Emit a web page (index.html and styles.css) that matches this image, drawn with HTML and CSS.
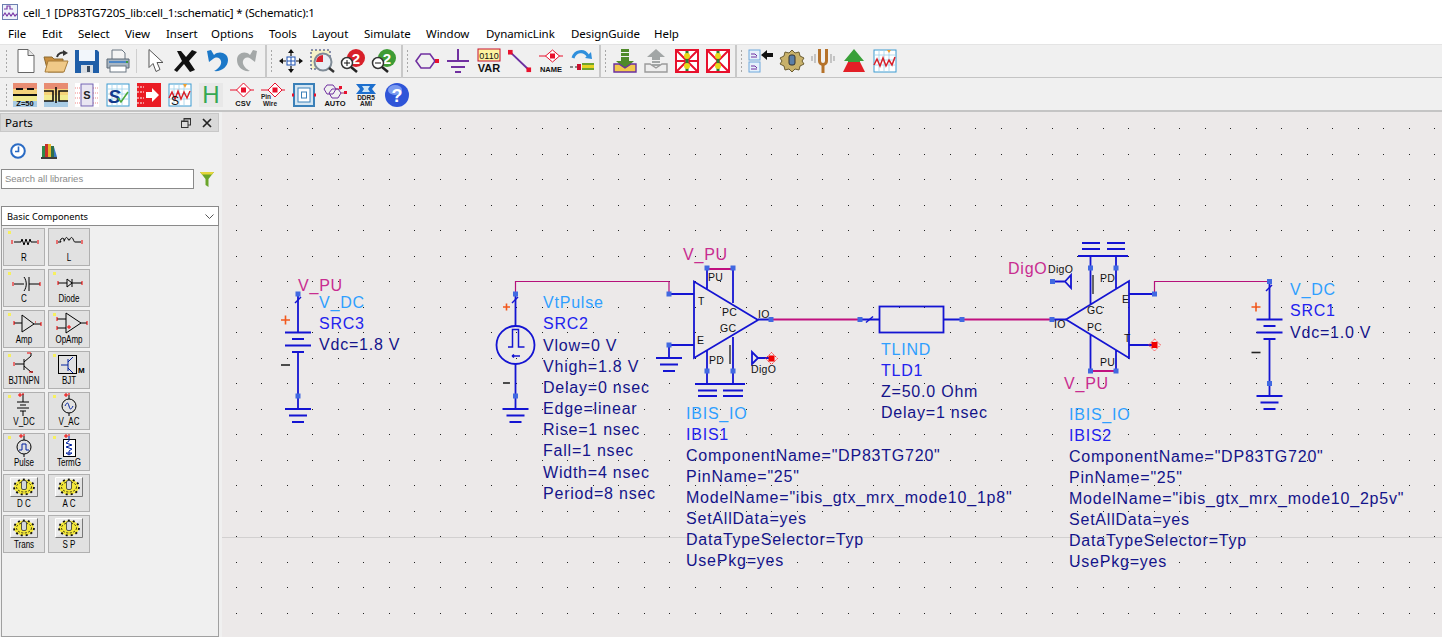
FILE: index.html
```html
<!DOCTYPE html>
<html lang="en">
<head>
<meta charset="utf-8">
<title>cell_1 schematic</title>
<link rel="stylesheet" href="styles.css">
</head>
<body>
<svg class="defs" width="0" height="0" aria-hidden="true">
  <defs>
    <g id="gear">
      <ellipse cx="20" cy="12" rx="10" ry="7.500" fill="#f4e83a" stroke="#111" stroke-width="1.800" stroke-dasharray="2 3"/>
      <ellipse cx="20" cy="12" rx="7.500" ry="5" fill="none" stroke="#111" stroke-width=".8" stroke-dasharray="2 1.500"/>
      <rect x="17.500" y="5.500" width="5" height="9" rx="1.500" fill="#d4d8dc" stroke="#333" stroke-width=".8"/>
    </g>
    <g id="ssch">
      <rect x="1" y="1" width="22" height="22" fill="#fff" stroke="#3d9bd1"/>
      <path d="M1 6h22M1 11h22M1 16h22M6 1v22M11 1v22M16 1v22" stroke="#9fd0ea" stroke-width=".8"/>
    </g>
    <g id="redhatch">
      <rect x="1" y="1" width="22" height="22" fill="#fff" stroke="#e8112d" stroke-width="2"/>
      <path d="M1 1l22 22M23 1L1 23" stroke="#e8112d" stroke-width="2"/>
      <rect x="10.500" y="2" width="3" height="20" fill="#2e7d32"/>
      <circle cx="12" cy="7" r="3" fill="#e8d81a"/><circle cx="12" cy="17" r="3" fill="#e8d81a"/>
    </g>
  </defs>
</svg>
<header class="title-bar">
  <svg class="app-icon" width="16" height="16" viewBox="0 0 16 16"><rect x=".5" y=".5" width="15" height="15" fill="#eef3fa" stroke="#6c7fb0"/><path d="M2 5h3V2h3v3h3M1 12l2-3 2 3 2-3 2 3 2-3 2 3 2-2" fill="none" stroke="#7a3aa8" stroke-width="1.2"/></svg>
  <span>cell_1 [DP83TG720S_lib:cell_1:schematic] * (Schematic):1</span>
</header>
<nav class="menu-bar">
  <span>File</span><span>Edit</span><span>Select</span><span>View</span><span>Insert</span><span>Options</span><span>Tools</span><span>Layout</span><span>Simulate</span><span>Window</span><span>DynamicLink</span><span>DesignGuide</span><span>Help</span>
</nav>
<div class="toolbar">
  <div class="group">
    <i class="grip grip-first"></i>
    <svg class="ic" viewBox="0 0 24 24"><path d="M5 .5h10l6 6v17H5z" fill="#fff" stroke="#666"/><path d="M15 .5v6h6" fill="#e6e6e6" stroke="#666"/></svg>
    <svg class="ic" viewBox="0 0 24 24"><path d="M0 8h8l2 2h9v13H4z" fill="#c98f3f" stroke="#8c6a30"/><path d="M4 12h20l-4 11H1z" fill="#f0c987" stroke="#a67c3a"/><path d="M13 8c1-4 5-5 8-4" fill="none" stroke="#333" stroke-width="2"/><path d="M19 1l5 3-5 3z" fill="#333"/></svg>
    <svg class="ic" viewBox="0 0 24 24"><path d="M0 1h22l2 2v21H0z" fill="#1f5ea8"/><rect x="4" y="1" width="16" height="11" fill="#f2f6fb"/><rect x="6" y="16" width="12" height="8" fill="#d8dde3"/><rect x="12" y="17" width="3" height="6" fill="#3a4a5e"/></svg>
    <svg class="ic" viewBox="0 0 24 24"><path d="M6 1h10l3 3v7H6z" fill="#f4f4f4" stroke="#6b7682"/><path d="M1 10h22v9H1z" fill="#a9b6c2" stroke="#5c6874"/><rect x="4" y="17" width="16" height="6" fill="#fff" stroke="#6b7682"/><rect x="3" y="12" width="18" height="2" fill="#4e87c6"/><rect x="20" y="12" width="2" height="2" fill="#3c9c3c"/></svg>
    <i class="sep"></i>
    <svg class="ic" viewBox="0 0 24 24"><path d="M6 .5v18l4-4 3 8 4-2-3-7h6z" fill="#fff" stroke="#555"/></svg>
    <svg class="ic" viewBox="0 0 24 24"><path d="M3 2l4 0 5 6 6-7 5 2-8 9 6 9-5 2-6-8-7 8-3-2 8-9z" fill="#111"/></svg>
    <svg class="ic" viewBox="0 0 24 24"><path d="M2 2l2 11 4-3c4-3 7-1 8 2 1 4-3 8-7 10 7 1 14-4 14-11 0-7-9-10-14-5L6 1z" fill="#1c78c8"/></svg>
    <svg class="ic" viewBox="0 0 24 24"><path d="M21 2l-2 11-4-3c-4-3-7-1-8 2-1 4 3 8 7 10-7 1-13-4-13-11 0-7 8-10 13-5l3-5z" fill="#a4a8a8"/></svg>
  </div>
  <div class="group">
    <i class="grip"></i>
    <svg class="ic" viewBox="0 0 24 24"><rect x="8" y="8" width="8" height="8" fill="#fff" stroke="#1c50b0"/><path d="M12 8v8M8 12h8" stroke="#1c50b0"/><path d="M12 1v6M12 17v6M1 12h6M17 12h6" stroke="#111" stroke-width="1.2"/><path d="M12 0l3 4H9zM12 24l3-4H9zM0 12l4-3v6zM24 12l-4-3v6z" fill="#111"/></svg>
    <svg class="ic" viewBox="0 0 24 24"><rect x="1" y="1" width="19" height="19" fill="#f5f2c8" stroke="#22306e" stroke-dasharray="2 2"/><circle cx="13" cy="13" r="8.500" fill="#e8eef4" stroke="#7f8b96" stroke-width="2"/><path d="M13 6v7H6a7 7 0 0 1 7-7z" fill="#d8202a"/><path d="M19 19l5 4" stroke="#333" stroke-width="2.500"/></svg>
    <svg class="ic" viewBox="0 0 24 24"><circle cx="15" cy="9" r="9" fill="#d8202a"/><text class="ball" x="15" y="14.500">2</text><circle cx="6" cy="14" r="5.500" fill="#fff" stroke="#333" stroke-width="1.500"/><path d="M3 14h6M6 11v6" stroke="#111"/><path d="M10 18l6 5" stroke="#222" stroke-width="2.500"/></svg>
    <svg class="ic" viewBox="0 0 24 24"><circle cx="15" cy="9" r="9" fill="#3e9c35"/><text class="ball" x="15" y="14.500">2</text><circle cx="6" cy="14" r="5.500" fill="#fff" stroke="#333" stroke-width="1.500"/><path d="M3 14h6" stroke="#111"/><path d="M10 18l6 5" stroke="#222" stroke-width="2.500"/></svg>
  </div>
  <div class="group">
    <i class="grip"></i>
    <svg class="ic" viewBox="0 0 24 24"><path d="M1 12l5-7h9l5 7-5 7H6z" fill="none" stroke="#7030a0" stroke-width="1.600"/><rect x="20" y="10" width="4" height="4" fill="#e8112d"/></svg>
    <svg class="ic" viewBox="0 0 24 24"><path d="M12 0v12M1 12h22M5 18h14M9 23h6" stroke="#7030a0" stroke-width="2"/></svg>
    <svg class="ic" viewBox="0 0 24 24"><rect x="1" y="0" width="22" height="12" fill="#fdf3a0" stroke="#c8102e"/><text class="var-a" x="12" y="9.500">0110</text><text class="var-b" x="12" y="23">VAR</text></svg>
    <svg class="ic" viewBox="0 0 26 24"><path d="M3 3l20 19" stroke="#6a2fa0" stroke-width="2"/><rect x="0" y="0" width="5" height="5" fill="#e8112d"/><rect x="20" y="19" width="5" height="5" fill="#e8112d"/></svg>
    <svg class="ic" viewBox="0 0 24 24"><path d="M0 7h7M20 7h4" stroke="#e8112d"/><path d="M13.500 1l7 6-7 6-7-6z" fill="#fff" stroke="#e8112d"/><rect x="11" y="4.500" width="5" height="5" fill="#e8112d"/><text class="icon-lbl" x="12" y="23">NAME</text></svg>
    <svg class="ic" viewBox="0 0 24 24"><path d="M3 9c2-7 11-9 15-2" fill="none" stroke="#2f8fdc" stroke-width="3"/><path d="M15 9l7 1-1-7z" fill="#2f8fdc"/><path d="M0 18h3M5 18h3M8 18h3" stroke="#222"/><rect x="7" y="15" width="4" height="6" fill="#c8102e"/><rect x="12" y="14" width="12" height="7" fill="#6ea32e"/><rect x="12" y="16" width="12" height="3" fill="#e6d320"/></svg>
  </div>
  <div class="group">
    <i class="grip"></i>
    <svg class="ic" viewBox="0 0 24 24"><path d="M8 0h8v3H8zM8 4h8v3H8zM8 8h8v4h5l-9 8-9-8h5z" fill="#4f8a2a"/><path d="M1 15v8h22v-8h-5l-6 4-6-4z" fill="#f2c94c" stroke="#6a2fa0" stroke-width="1.400"/></svg>
    <svg class="ic" viewBox="0 0 24 24"><path d="M12 0l9 8h-5v3H8V8H3zM8 12h8v2H8zM8 15h8v2H8z" fill="#a2a6a6"/><path d="M1 15v8h22v-8h-5l-6 4-6-4z" fill="#eee" stroke="#9a9a9a" stroke-width="1.400"/></svg>
    <svg class="ic" viewBox="0 0 24 24"><use href="#redhatch"/><path d="M1 12h9M14 12h9" stroke="#e8112d" stroke-width="2"/></svg>
    <svg class="ic" viewBox="0 0 24 24"><use href="#redhatch"/></svg>
  </div>
  <div class="group group-last">
    <i class="grip"></i>
    <svg class="ic" viewBox="0 0 24 24"><rect x="0" y="1" width="11" height="10" fill="#e5f1fb" stroke="#6fa8dc"/><rect x="0" y="13" width="11" height="10" fill="#e5f1fb" stroke="#6fa8dc"/><path d="M2 5h4l2 2M2 8h6M2 17h4l2 2M2 20h6" fill="none" stroke="#7030a0"/><path d="M12 6l6-5v3h6v4h-6v3z" fill="#111"/></svg>
    <svg class="ic" viewBox="0 0 24 24"><path d="M12 1l3 3 4-1 1 4 4 2-2 3 2 3-4 2-1 4-4-1-3 3-3-3-4 1-1-4-4-2 2-3-2-3 4-2 1-4 4 1z" fill="#c8b16a" stroke="#6b5d33"/><rect x="9" y="6" width="6" height="10" rx="2" fill="#5b7fa8" stroke="#333"/></svg>
    <svg class="ic" viewBox="0 0 24 24"><path d="M7 0v12a5 5 0 0 0 10 0V0h-3v12a2 2 0 0 1-4 0V0z" fill="#b5722a"/><rect x="10.500" y="16" width="3" height="8" fill="#b5722a"/><path d="M4 5v9M1 7v5M20 5v9M23 7v5" stroke="#999"/></svg>
    <svg class="ic" viewBox="0 0 24 24"><path d="M12 0l10 12h-4v2H6v-2H2z" fill="#3aa03a"/><path d="M6 13h12l5 10H1z" fill="#e21f26"/></svg>
    <svg class="ic" viewBox="0 0 24 24"><use href="#ssch"/><path d="M1 16l3-6 3 7 3-8 3 8 3-6 3 5 3-8" fill="none" stroke="#d8202a" stroke-width="1.500"/><path d="M14 1h4l-2 3z" fill="#f2a02e"/></svg>
  </div>
</div>
<div class="toolbar toolbar-second">
  <i class="grip grip-first"></i>
  <svg class="ic" viewBox="0 0 24 24"><rect width="24" height="6" fill="#e88c72"/><rect y="6" width="24" height="6" fill="#f5d37a"/><rect y="12" width="24" height="6" fill="#f2eb8f"/><rect y="18" width="24" height="6" fill="#a8cbe4"/><path d="M3 6h7M14 6h7M0 12h24" stroke="#111" stroke-width="2"/><text class="z50" x="12" y="22.500">Z=50</text></svg>
  <svg class="ic" viewBox="0 0 24 24"><rect width="24" height="6" fill="#e88c72"/><rect y="6" width="24" height="6" fill="#f5d37a"/><rect y="12" width="24" height="6" fill="#f2eb8f"/><rect y="18" width="24" height="6" fill="#a8cbe4"/><path d="M0 8h9v10H0M24 8h-9v10h9M12 4v16" fill="none" stroke="#111" stroke-width="1.600"/></svg>
  <svg class="ic" viewBox="0 0 24 24"><rect width="24" height="24" fill="#fff"/><path d="M0 5h6M0 10h6M0 15h6M0 20h6M18 5h6M18 10h6M18 15h6M18 20h6" stroke="#e88" stroke-dasharray="1 1"/><rect x="6" y="1" width="12" height="22" fill="#e9e6f2" stroke="#7060b0"/><text class="s-small" x="12" y="16">S</text></svg>
  <svg class="ic" viewBox="0 0 24 24"><use href="#ssch"/><text class="s-big" x="2" y="20">S</text><path d="M12 15l3 4 7-10" fill="none" stroke="#4aa83a" stroke-width="1.600"/></svg>
  <svg class="ic" viewBox="0 0 24 24"><rect width="24" height="24" fill="#ea1c24"/><path d="M0 4h7M0 9h7M0 15h7M0 20h7" stroke="#fff" stroke-dasharray="2 1"/><path d="M9 9h6V5l7 7-7 7v-4H9z" fill="#fff"/></svg>
  <svg class="ic" viewBox="0 0 24 24"><use href="#ssch"/><path d="M1 15l3-6 3 7 3-8 3 8 3-7 3 6 3-7" fill="none" stroke="#d8202a" stroke-width="1.400"/><path d="M15 1h4l-2 4z" fill="#f2a02e"/><text class="s-mid" x="3" y="21.500">S</text></svg>
  <svg class="ic" viewBox="0 0 24 24"><rect width="24" height="24" fill="#e8e8e8"/><text class="h-big" x="12" y="20">H</text></svg>
  <svg class="ic" viewBox="0 0 24 24"><path d="M0 7h7M20 7h4" stroke="#e8112d"/><path d="M13.500 0l7 7-7 7-7-7z" fill="#fff" stroke="#e8112d"/><rect x="11" y="4.500" width="5" height="5" fill="#e8112d"/><text class="icon-lbl" x="13" y="22.500">CSV</text></svg>
  <svg class="ic" viewBox="0 0 24 24"><path d="M0 7h7M21 7h3" stroke="#e8112d"/><path d="M14 0l7 7-7 7-7-7z" fill="#fff" stroke="#e8112d"/><rect x="11.500" y="4.500" width="5" height="5" fill="#e8112d"/><text class="icon-xs" x="5" y="15.500">Pin</text><text class="icon-xs" x="9" y="22.500">Wire</text></svg>
  <svg class="ic" viewBox="0 0 24 24"><rect x="2" y="1" width="20" height="22" fill="#d5e6f2" stroke="#3a80b8" stroke-width="2"/><rect x="6" y="5" width="12" height="14" fill="#fff" stroke="#3a80b8"/><rect x="9.500" y="9" width="5" height="6" fill="none" stroke="#3a80b8"/><path d="M0 12h2M22 12h2" stroke="#e8112d" stroke-width="3"/></svg>
  <svg class="ic" viewBox="0 0 24 24"><path d="M1 6l3-4h6l3 4-3 5H4z" fill="none" stroke="#7030a0"/><path d="M6 10l3-4h6l3 4-3 5H9z" fill="none" stroke="#7030a0"/><path d="M13 6h5M18 10h4" stroke="#a0306a"/><rect x="16" y="3" width="3" height="3" fill="#e8112d"/><rect x="21" y="8" width="3" height="3" fill="#e8112d"/><text class="icon-lbl" x="12" y="22.500">AUTO</text></svg>
  <svg class="ic" viewBox="0 0 24 24"><path d="M2 1h20l-4 5 4 5H2l4-5z" fill="#1d6fce"/><path d="M8 3h8l-2 3 2 3H8l2-3z" fill="#cfe6f7"/><text class="icon-xs" x="12" y="17">DDR5</text><text class="icon-xs" x="12" y="23">AMI</text></svg>
  <svg class="ic" viewBox="0 0 24 24"><circle cx="12" cy="12" r="12" fill="#2f55d8"/><ellipse cx="10" cy="7" rx="7" ry="5" fill="#7c9cf0"/><text class="help" x="12" y="19">?</text></svg>
</div>
<main class="workspace">
  <aside class="parts">
    <div class="parts-head">
      <span>Parts</span>
      <div class="head-icons">
        <svg width="10" height="10" viewBox="0 0 10 10"><rect x="3" y=".5" width="6.500" height="6.500" fill="none" stroke="#333"/><rect x=".5" y="3" width="6.500" height="6.500" fill="#dcdcdc" stroke="#333"/><path d="M3 1h6.500M.5 3.500h6.500" stroke="#333"/></svg>
        <svg width="10" height="10" viewBox="0 0 10 10"><path d="M1 1l8 8M9 1l-8 8" stroke="#222" stroke-width="1.700"/></svg>
      </div>
    </div>
    <div class="parts-tools">
      <svg width="16" height="16" viewBox="0 0 16 16"><circle cx="8" cy="8" r="6.800" fill="#fff" stroke="#2a6bc4" stroke-width="2"/><path d="M8.500 3.500v5H5" fill="none" stroke="#2a6bc4" stroke-width="1.600"/></svg>
      <svg width="17" height="16" viewBox="0 0 17 16"><rect x="1" y="3" width="3" height="11" fill="#2f8a4a"/><rect x="4" y="1" width="3" height="13" fill="#c8302a"/><rect x="7" y="1" width="3" height="13" fill="#e4b82c"/><rect x="10" y="3" width="3" height="11" fill="#2f6f4a"/><path d="M13 4l3 10h-3z" fill="#3a78c4"/><path d="M0 15h16" stroke="#111" stroke-width="1.600"/></svg>
    </div>
    <div class="search-row">
      <div class="search-box">Search all libraries</div>
      <svg width="14" height="16" viewBox="0 0 14 16"><path d="M0 1h14L8.500 8v8l-3-2V8z" fill="#6aa52a"/><path d="M0 1h14l-2 2.500H2z" fill="#e4d53a"/></svg>
    </div>
    <div class="combo">
      <span>Basic Components</span>
      <svg width="9" height="5" viewBox="0 0 9 5"><path d="M.5.500l4 4 4-4" fill="none" stroke="#555"/></svg>
    </div>
    <div class="palette">
      <div class="pal">
        <svg class="pal-ic" viewBox="0 0 40 22"><rect class="tick" x="4" y="2" width="3" height="3"/><path d="M10 13h7l1-3 2 6 2-6 2 6 2-6 1 3h6" class="ln"/><path d="M8 11v4M34 11v4" class="rd"/></svg>
        <span>R</span>
      </div>
      <div class="pal">
        <svg class="pal-ic" viewBox="0 0 40 22"><path d="M9 13h3a2 2 0 1 1 3-3c0 3 0 3 1 0 1-2 2-2 3 0 1 2 1 2 2 0 1-2 2-2 3 0 1 2 1 3 2 3h6" class="ln"/><path d="M8 11v4M33 11v4" class="rd"/></svg>
        <span>L</span>
      </div>
      <div class="pal">
        <svg class="pal-ic" viewBox="0 0 40 22"><rect class="tick" x="4" y="2" width="3" height="3"/><path d="M10 14h10M20 7c3 4 3 10 0 14M25 7v14M25 14h11" class="ln"/><path d="M9 12v4M36 12v4" class="rd"/></svg>
        <span>C</span>
      </div>
      <div class="pal">
        <svg class="pal-ic" viewBox="0 0 40 22"><rect class="tick" x="4" y="2" width="3" height="3"/><path d="M9 13h9M18 9v8l5-4zM23 9v8M23 13h10" class="ln"/><path d="M9 11v4M33 11v4" class="rd"/></svg>
        <span>Diode</span>
      </div>
      <div class="pal">
        <svg class="pal-ic" viewBox="0 0 40 22"><rect class="tick" x="4" y="2" width="3" height="3"/><path d="M10 12h8M18 4v17l12-8zM30 13h7" class="ln"/><path d="M10 10v4M31 11h1M37 11v4" class="rd"/></svg>
        <span>Amp</span>
      </div>
      <div class="pal">
        <svg class="pal-ic" viewBox="0 0 40 22"><rect class="tick" x="4" y="2" width="3" height="3"/><path d="M8 8h9M8 17h9M17 2v20l15-10zM32 12h6" class="ln"/><path d="M8 6v4M8 15v4M38 10v4M18 16h4M20 14v4" class="rd"/></svg>
        <span>OpAmp</span>
      </div>
      <div class="pal">
        <svg class="pal-ic" viewBox="0 0 40 22"><rect class="tick" x="4" y="2" width="3" height="3"/><path d="M11 12h9M20 7v11M20 10l7-6M27 1v3M20 14l7 6h2" class="ln"/><path d="M10 10v4M23 1h4M25 20h4" class="rd"/></svg>
        <span class="tight">BJT NPN</span>
      </div>
      <div class="pal">
        <svg class="pal-ic" viewBox="0 0 40 22"><rect class="tick" x="4" y="2" width="3" height="3"/><rect x="9.500" y="3.500" width="18" height="18" fill="none" stroke="#000" stroke-width="1"/><path d="M12 13h7M19 7v12M19 10l5-5M19 16l5 5" fill="none" stroke="#00209f"/><text class="pal-m" x="29" y="21">M</text></svg>
        <span>BJT</span>
      </div>
      <div class="pal">
        <svg class="pal-ic" viewBox="0 0 40 22"><rect class="tick" x="4" y="2" width="3" height="3"/><path d="M19 1v8M13 9h12M16 12h6M13 15h12M16 18h6M19 18v5" class="ln"/><path d="M14 2h4M16 0v4M18 1h2" class="rd"/></svg>
        <span>V_DC</span>
      </div>
      <div class="pal">
        <svg class="pal-ic" viewBox="0 0 40 22"><rect class="tick" x="4" y="2" width="3" height="3"/><circle cx="20" cy="13" r="7" fill="none" stroke="#000"/><path d="M16 13c2-4 3-4 4 0s2 4 4 0" fill="none" stroke="#00209f"/><path d="M20 2v4M20 20v3" class="ln"/><path d="M15 2h4M17 0v4M19 1h2" class="rd"/></svg>
        <span>V_AC</span>
      </div>
      <div class="pal">
        <svg class="pal-ic" viewBox="0 0 40 22"><rect class="tick" x="4" y="2" width="3" height="3"/><circle cx="20" cy="13" r="7" fill="none" stroke="#000"/><path d="M15 16h3v-6h4v6h3" fill="none" stroke="#00209f"/><path d="M20 2v4M20 20v3" class="ln"/><path d="M15 2h4M17 0v4M19 1h2" class="rd"/></svg>
        <span>Pulse</span>
      </div>
      <div class="pal">
        <svg class="pal-ic" viewBox="0 0 40 22"><rect class="tick" x="4" y="2" width="3" height="3"/><rect x="14.500" y="5.500" width="12" height="17" fill="#fff" stroke="#000"/><path d="M20 2v5l-3 2 6 2-6 2 6 2-3 2v3M17 19h6l-3 2z" fill="none" stroke="#00209f"/><path d="M15 2h4M17 0v4M19 1h2" class="rd"/></svg>
        <span>TermG</span>
      </div>
      <div class="pal"><svg class="pal-ic" viewBox="0 0 40 22"><path class="simbtn" d="M6.500 21.500V2.500H33.500"/><path class="simbtn-d" d="M33.500 2.500V21.500H6.500"/><use href="#gear"/></svg><span>D C</span></div>
      <div class="pal"><svg class="pal-ic" viewBox="0 0 40 22"><path class="simbtn" d="M6.500 21.500V2.500H33.500"/><path class="simbtn-d" d="M33.500 2.500V21.500H6.500"/><use href="#gear"/></svg><span>A C</span></div>
      <div class="pal"><svg class="pal-ic" viewBox="0 0 40 22"><path class="simbtn" d="M6.500 21.500V2.500H33.500"/><path class="simbtn-d" d="M33.500 2.500V21.500H6.500"/><use href="#gear"/></svg><span>Trans</span></div>
      <div class="pal"><svg class="pal-ic" viewBox="0 0 40 22"><path class="simbtn" d="M6.500 21.500V2.500H33.500"/><path class="simbtn-d" d="M33.500 2.500V21.500H6.500"/><use href="#gear"/></svg><span>S P</span></div>
    </div>
  </aside>
  <svg class="canvas" viewBox="222 112 1220 525" width="1220" height="525">
    <defs>
      <pattern id="dots" x="287" y="256" width="51" height="51" patternUnits="userSpaceOnUse">
        <rect width="1" height="1" fill="#222"/><rect x="25" width="1" height="1" fill="#222"/>
        <rect y="25" width="1" height="1" fill="#222"/><rect x="25" y="25" width="1" height="1" fill="#222"/>
      </pattern>
      <g id="gnd"><path d="M-13 0H13M-9 6.500H9M-6 13H6" class="w"/></g>
      <g id="batt"><path d="M-13 0H13M-6 6.500H6M-13 13H13M-6 19.500H6" class="w"/></g>
      <g id="redpin"><path d="M0-6L6 0 0 6-6 0z" fill="none" stroke="#ff3030" stroke-dasharray="1.500 1"/><rect x="-3" y="-3" width="6" height="6" fill="#f00000"/></g>
    </defs>
    <rect x="222" y="112" width="1220" height="525" fill="url(#dots)"/>
    <path d="M222 537.500H1442" stroke="#d2d0d0"/>

    <path class="w" d="M298 294V332M298 352V396V409"/>
    <path class="ws" d="M295 303l6-6"/>
    <use href="#batt" x="298" y="332.500"/><use href="#gnd" x="298" y="409"/>
    <path class="plus" d="M281 320h9M285.500 315.500v9"/><path class="minus" d="M281 365h9"/>
    <text class="t node" x="298" y="291">V_PU</text>
    <text class="t name" x="319" y="308">V_DC</text>
    <text class="t inst" x="319" y="329">SRC3</text>
    <text class="t param" x="319" y="350">Vdc=1.8 V</text>

    <path class="m1" d="M515.500 294V281.500H669V294"/>
    <path class="w" d="M515.500 294V326M515.500 364V409"/>
    <path class="ws" d="M512 303l6-6"/>
    <circle class="w" cx="515.500" cy="345" r="19"/>
    <path class="ws" d="M508 347h4.500V329.500h6V347h6M512 356h8M512 356l2-1.500M512 356l2 1.500"/>
    <use href="#gnd" x="515.500" y="409"/>
    <path class="plus" d="M503 307h7M506.500 303.500v7"/><path class="minus" d="M503 383h7"/>
    <text class="t name" x="543" y="308">VtPulse</text>
    <text class="t inst" x="543" y="329">SRC2</text>
    <text class="t param" x="543" y="350.500">Vlow=0 V</text>
    <text class="t param" x="543" y="371.500">Vhigh=1.8 V</text>
    <text class="t param" x="543" y="392.500">Delay=0 nsec</text>
    <text class="t param" x="543" y="414">Edge=linear</text>
    <text class="t param" x="543" y="435">Rise=1 nsec</text>
    <text class="t param" x="543" y="456">Fall=1 nsec</text>
    <text class="t param" x="543" y="477.500">Width=4 nsec</text>
    <text class="t param" x="543" y="498.500">Period=8 nsec</text>

    <path class="w" d="M694 281.500V358L758 320zM669 294H694M669 345H694M669 345V358M707 268V290M733 268V303M707 350V384M733 337V384M758 319.500H771"/>
    <use href="#gnd" x="669" y="358"/>
    <path class="w" d="M695 384H745M698 390.500H717M723 390.500H743M698 396H717M723 396H743"/>
    <path class="grey" d="M730 345V364"/>
    <path class="m2" d="M707 269H733"/>
    <path class="w" d="M752 352V364L758 358ZM758 358H771"/>
    <use href="#redpin" x="771.500" y="358.500"/>
    <text class="t node" x="683" y="260">V_PU</text>
    <text class="pin" x="708" y="281">PU</text><text class="pin" x="698" y="305">T</text><text class="pin" x="722" y="316">PC</text><text class="pin" x="720" y="332">GC</text><text class="pin" x="697" y="344">E</text><text class="pin" x="709" y="364">PD</text><text class="pin" x="758" y="318">IO</text><text class="pin" x="751" y="373">DigO</text>
    <text class="t name" x="686" y="418.500">IBIS_IO</text>
    <text class="t inst" x="686" y="439.500">IBIS1</text>
    <text class="t param" x="686" y="461">ComponentName="DP83TG720"</text>
    <text class="t param" x="686" y="482">PinName="25"</text>
    <text class="t param" x="686" y="503">ModelName="ibis_gtx_mrx_mode10_1p8"</text>
    <text class="t param" x="686" y="524">SetAllData=yes</text>
    <text class="t param" x="686" y="545">DataTypeSelector=Typ</text>
    <text class="t param" x="686" y="566">UsePkg=yes</text>

    <path class="m2" d="M771 319.500H860M962 319.500H1052"/>
    <path class="w" d="M860 319.500H879M944 319.500H962M1052 319.500H1066"/>
    <path class="ws" d="M866 322.500l7-6"/>
    <rect class="w" x="879.500" y="306.500" width="64" height="26"/>
    <text class="t name" x="881" y="355">TLIND</text>
    <text class="t inst" x="881" y="376">TLD1</text>
    <text class="t param" x="881" y="397">Z=50.0 Ohm</text>
    <text class="t param" x="881" y="418">Delay=1 nsec</text>

    <path class="w" d="M1129 281V358L1066 319.500ZM1078 256H1128M1082 249H1100M1107 249H1125M1082 243H1100M1107 243H1125M1090.500 256V305M1116 256V289M1090.500 335V371M1116 350V371M1129 294H1154.500M1129 345H1154M1052.500 281.500H1065M1065 281.500L1071 275V288Z"/>
    <path class="grey" d="M1093 275V294"/>
    <path class="m2" d="M1090.500 371H1116"/>
    <path class="m1" d="M1154.500 294V281.500H1269.500"/>
    <use href="#redpin" x="1154.500" y="345"/>
    <text class="t node" x="1008" y="274">DigO</text>
    <text class="t node" x="1064" y="389">V_PU</text>
    <text class="pin" x="1048" y="273">DigO</text><text class="pin" x="1100" y="282">PD</text><text class="pin" x="1122" y="303">E</text><text class="pin" x="1087" y="314">GC</text><text class="pin" x="1087" y="331">PC</text><text class="pin" x="1124" y="342">T</text><text class="pin" x="1100" y="366">PU</text><text class="pin" x="1054" y="328">IO</text>
    <text class="t name" x="1069" y="420">IBIS_IO</text>
    <text class="t inst" x="1069" y="441">IBIS2</text>
    <text class="t param" x="1069" y="462">ComponentName="DP83TG720"</text>
    <text class="t param" x="1069" y="483">PinName="25"</text>
    <text class="t param" x="1069" y="504">ModelName="ibis_gtx_mrx_mode10_2p5v"</text>
    <text class="t param" x="1069" y="525">SetAllData=yes</text>
    <text class="t param" x="1069" y="546">DataTypeSelector=Typ</text>
    <text class="t param" x="1069" y="567">UsePkg=yes</text>

    <path class="w" d="M1269.500 281.500V319.500M1269.500 339V396"/>
    <path class="ws" d="M1266 291l6-6"/>
    <use href="#batt" x="1269.500" y="319.500"/><use href="#gnd" x="1269.500" y="396"/>
    <path class="plus" d="M1251.500 307h9M1256 302.500v9"/><path class="minus" d="M1251.500 352.500h9"/>
    <text class="t name" x="1290" y="295">V_DC</text>
    <text class="t inst" x="1290" y="316">SRC1</text>
    <text class="t param" x="1290" y="338">Vdc=1.0 V</text>

    <g class="pins">
      <rect x="295.500" y="291.500" width="5" height="5"/><rect x="295.500" y="393.500" width="5" height="5"/>
      <rect x="513" y="291.500" width="5" height="5"/><rect x="513" y="393.500" width="5" height="5"/>
      <rect x="666.500" y="291.500" width="5" height="5"/><rect x="666.500" y="342.500" width="5" height="5"/>
      <rect x="704.500" y="265.500" width="5" height="5"/><rect x="730.500" y="265.500" width="5" height="5"/>
      <rect x="704.500" y="368.500" width="5" height="5"/><rect x="730.500" y="368.500" width="5" height="5"/>
      <rect x="768.500" y="317" width="5" height="5"/><rect x="857.500" y="317" width="5" height="5"/>
      <rect x="959.500" y="317" width="5" height="5"/><rect x="1049.500" y="317" width="5" height="5"/>
      <rect x="1050" y="279" width="5" height="5"/>
      <rect x="1088" y="265.500" width="5" height="5"/><rect x="1113.500" y="265.500" width="5" height="5"/>
      <rect x="1088" y="368.500" width="5" height="5"/><rect x="1113.500" y="368.500" width="5" height="5"/>
      <rect x="1152" y="291.500" width="5" height="5"/><rect x="1267" y="279" width="5" height="5"/><rect x="1267" y="381" width="5" height="5"/>
    </g>
  </svg>
</main>
</body>
</html>
```
FILE: styles.css
```css
* { box-sizing: border-box; }
html, body { margin: 0; height: 100%; overflow: hidden; }
body { font-family: "Noto Sans", "Open Sans", sans-serif; background: #f0f0f0; color: #000; display: flex; flex-direction: column; height: 637px; }
.defs { position: absolute; }
.title-bar { height: 22px; background: #fff; display: flex; align-items: center; gap: 5px; padding: 2px 0 0 2px; font-size: 11.5px; letter-spacing: -.18px; white-space: nowrap; }
.app-icon { flex: none; }
.menu-bar { height: 22px; background: #fff; display: grid; grid-template-columns: 34px 36px 47px 41px 45px 58px 43px 52px 62px 60px 85px 83px 40px; padding-left: 8px; align-items: center; font-size: 11.5px; letter-spacing: -.05px; }
.toolbar { height: 34px; display: flex; align-items: flex-start; background: #f0f0f0; border-top: 1px solid #e4e4e4; border-bottom: 1px solid #c4c4c4; padding-top: 4px; }
.toolbar-second { padding-top: 5px; border-top: 0; border-bottom: 2px solid #c4c4c4; }
.group { display: flex; height: 33px; margin-top: -4px; padding-top: 4px; border-right: 2px solid #c8c8c8; }
.group-last { border-right: 0; }
.grip { display: block; flex: none; width: 3px; height: 24px; margin: 0 6px 0 3px; background: radial-gradient(circle, #a8a8a8 1px, transparent 1px) 0 0 / 3px 4px; }
.grip-first { margin: 0 5px 0 5px; }
.ic { flex: none; width: 24px; height: 24px; margin-right: 7px; overflow: visible; }
.group .ic:last-child { margin-right: 5px; }
.group-last .ic:last-child { margin-right: 0; }
.sep { display: block; flex: none; width: 1px; height: 24px; margin: 0 6px 0 -1px; background: #cfcfcf; }
.ball { font: 700 15px "Liberation Sans", sans-serif; fill: #fff; text-anchor: middle; }
.var-a { font: 9px "Liberation Sans", sans-serif; text-anchor: middle; fill: #111; }
.var-b { font: 700 11px "Liberation Sans", sans-serif; text-anchor: middle; fill: #111; }
.icon-lbl { font: 700 7.5px "Liberation Sans", sans-serif; text-anchor: middle; fill: #111; }
.icon-xs { font: 700 6.5px "Liberation Sans", sans-serif; text-anchor: middle; fill: #222; }
.z50 { font: 700 7.5px "Liberation Sans", sans-serif; text-anchor: middle; fill: #111; }
.s-small { font: 700 11px "Liberation Sans", sans-serif; text-anchor: middle; fill: #222; }
.s-big { font: italic 700 19px "Liberation Sans", sans-serif; fill: #123a8c; }
.s-mid { font: 12px "Liberation Sans", sans-serif; fill: #111; }
.h-big { font: 24px "Liberation Sans", sans-serif; text-anchor: middle; fill: #35a853; }
.help { font: 700 18px "Liberation Sans", sans-serif; text-anchor: middle; fill: #fff; }
.workspace { flex: 1; min-height: 0; display: flex; }
.parts { flex: none; width: 222px; display: flex; flex-direction: column; padding: 1px 3px 0 0; }
.parts-head { height: 19px; background: #d9d9d9; border: 1px solid #c8c8c8; display: flex; align-items: center; justify-content: space-between; padding: 0 6px 0 4px; font-size: 11.5px; }
.head-icons { display: flex; gap: 11px; }
.parts-tools { display: flex; gap: 15px; padding: 11px 0 0 10px; height: 37px; }
.search-row { display: flex; align-items: center; gap: 6px; padding-left: 1px; margin-bottom: 17px; }
.search-box { width: 193px; height: 20px; background: #fff; border: 1px solid #8a8a8a; padding-left: 3px; font: 9.5px/18px "Liberation Sans", sans-serif; color: #8a8a8a; }
.combo { margin-left: 1px; height: 20px; background: #fff; border: 1px solid #8a8a8a; display: flex; align-items: center; justify-content: space-between; padding: 0 4px 0 5px; font-size: 9.3px; }
.palette { flex: 1; margin-left: 1px; border: 1px solid #a0a0a0; border-top: 0; padding: 2px 0 0 1px; display: grid; grid-template-columns: 42px 42px; grid-auto-rows: 38px; gap: 3px; align-content: start; }
.pal { background: #e1e1e1; border: 1px solid #b0b0b0; display: flex; flex-direction: column; align-items: center; font: 8px/12px "Liberation Sans", sans-serif; color: #000; }
.pal span { display: block; margin-top: 1px; transform: scaleY(1.25); white-space: nowrap; }
.pal .tight { word-spacing: -2px; }
.pal-ic { flex: none; width: 40px; height: 22px; overflow: visible; }
.ln { fill: none; stroke: #000; }
.rd { fill: none; stroke: #f00000; }
.tick { fill: #f6f060; }
.simbtn { fill: #ececec; stroke: #fff; }
.simbtn-d { fill: none; stroke: #777; }
.pal-m { font: 700 8px "Liberation Sans", sans-serif; fill: #000; }
.canvas { flex: none; display: block; background: #ece9e9; }
.t { font-family: "Liberation Sans", sans-serif; font-size: 16px; letter-spacing: .78px; }
.node { fill: #c82c90; }
.name { fill: #2f9fff; }
.inst { fill: #2222ee; }
.param { fill: #14148a; }
.pin { font: 10.5px "Liberation Sans", sans-serif; letter-spacing: .3px; fill: #111; }
.w { fill: none; stroke: #1414d2; stroke-width: 1.8; }
.ws { fill: none; stroke: #1414d2; stroke-width: 1.5; }
.m1 { fill: none; stroke: #b5107a; stroke-width: 1.2; }
.m2 { fill: none; stroke: #c0107f; stroke-width: 2; }
.grey { stroke: #666; stroke-width: 2; }
.plus { stroke: #f2581c; stroke-width: 1.6; fill: none; }
.minus { stroke: #222; stroke-width: 1.6; fill: none; }
.pins rect { fill: #4169e1; }
```
